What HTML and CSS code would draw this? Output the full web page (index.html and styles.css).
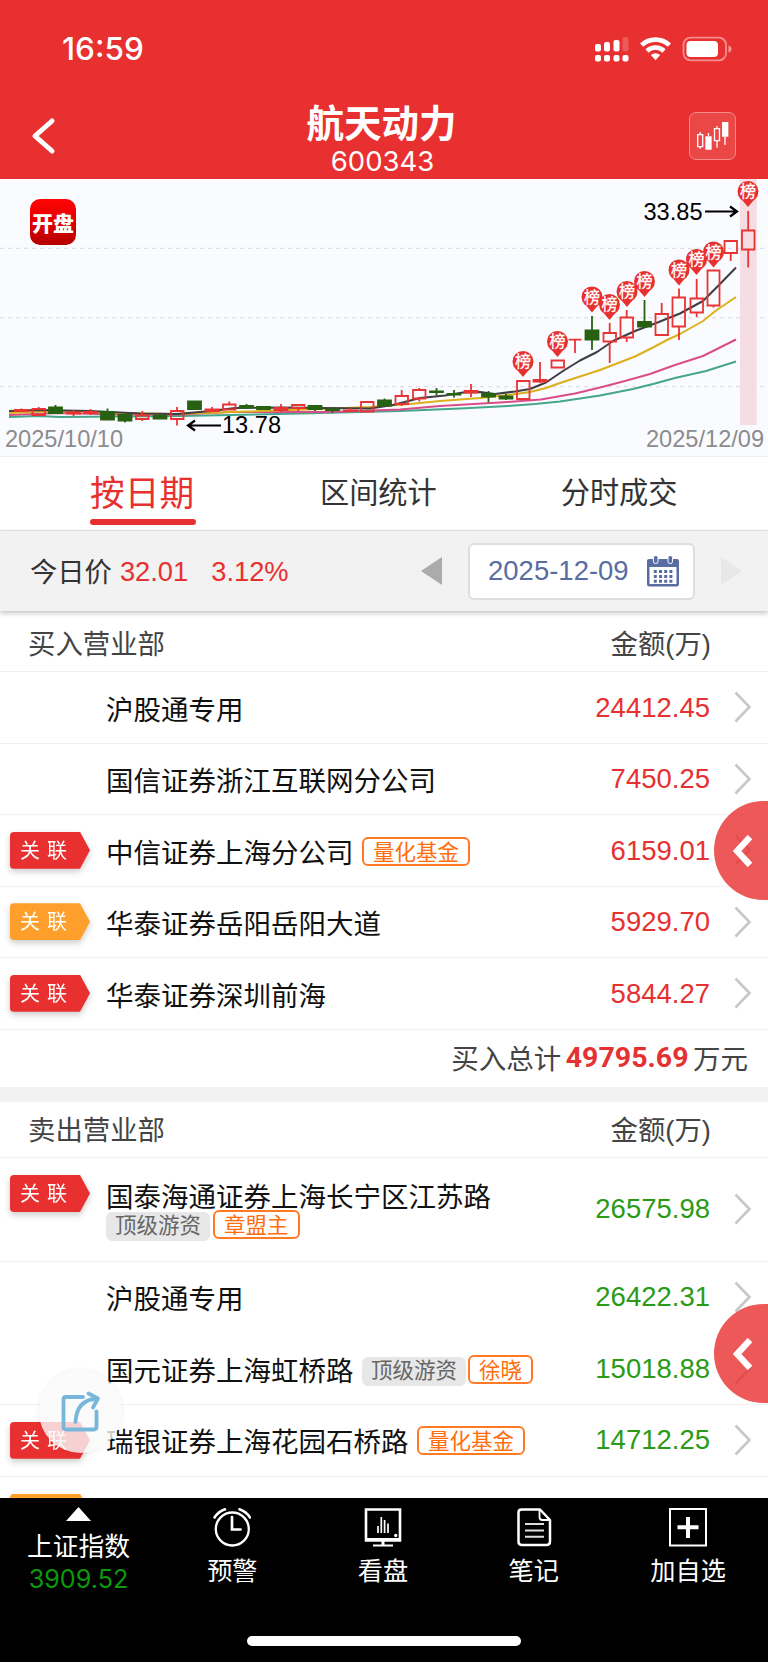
FILE: index.html
```html
<!DOCTYPE html>
<html lang="zh-CN">
<head>
<meta charset="utf-8">
<meta name="viewport" content="width=device-width">
<title>航天动力 600343</title>
<link rel="stylesheet" href="styles.css">
</head>
<body>
<svg width="0" height="0" class="defs">
  <defs>
    <symbol id="chev" viewBox="0 0 18 32"><path d="M1.500 1.500 L15.500 16 L1.500 30.500" fill="none" stroke="#c7c7c7" stroke-width="2.600"/></symbol>
    <symbol id="pin" viewBox="0 0 22 28"><path d="M4.300 18.500 L11 26.500 L17.700 18.500 Z"/><circle cx="11" cy="11" r="10.500"/></symbol>
  </defs>
</svg>
<div class="screen">
  <header class="header">
    <div class="status">
      <span class="clock">16:59</span>
      <svg class="status-icons" width="140" height="28" viewBox="593 35 140 28" fill="#fff">
        <rect x="595" y="44" width="6" height="7.500" rx="2"/><rect x="604" y="42" width="6" height="9.500" rx="2"/><rect x="613.500" y="40" width="6" height="11.500" rx="2"/><rect x="622.500" y="37" width="6" height="14.500" rx="2" opacity=".2"/>
        <rect x="595" y="55" width="6" height="6.500" rx="2"/><rect x="604" y="55" width="6" height="6.500" rx="2"/><rect x="613.500" y="55" width="6" height="6.500" rx="2"/><rect x="622.500" y="55" width="6" height="6.500" rx="2"/>
        <g fill="none" stroke="#fff" stroke-width="4.600"><path d="M641.600 45.200 A20 20 0 0 1 669.400 45.200"/><path d="M647 51 A12.200 12.200 0 0 1 664 51"/></g>
        <path d="M650.800 55 A7 7 0 0 1 660.200 55 L655.500 60.300 Z"/>
        <rect x="683.500" y="37.700" width="42.500" height="22.600" rx="7" fill="none" stroke="#fff" stroke-opacity=".45" stroke-width="1.800"/>
        <rect x="686.500" y="41" width="31.500" height="16" rx="4"/><path d="M728.500 45.500 Q731.500 46.500 731.500 49 T728.500 52.500 Z" opacity=".5"/>
      </svg>
    </div>
    <div class="nav">
      <svg class="back" width="28" height="40" viewBox="0 0 28 40"><path d="M24 5 L7 20 L24 35" fill="none" stroke="#fff" stroke-width="5" stroke-linecap="round" stroke-linejoin="round"/></svg>
      <div class="title"><h1>航天动力</h1><p>600343</p></div>
      <div class="kbtn">
        <svg width="34" height="32" viewBox="696 120 34 32" fill="none" stroke="#fff" stroke-width="1.300"><path d="M697.700 134.700h5v12h-5zM700.200 132v2.700M700.200 146.700v2M714.500 128.700h5v12h-5zM717 126v2.700M717 140.700v7M708.500 133v3M725 137v8"/><path d="M706 137h5v12h-5zM722.700 122.700h5v13.500h-5z" fill="#fff"/></svg>
      </div>
    </div>
  </header>

  <section class="chart">
    <svg width="768" height="277" viewBox="0 179 768 277">
      <defs><linearGradient id="lg" x1="0" y1="0" x2="0" y2="1"><stop offset="0" stop-color="#ff0505"/><stop offset=".4" stop-color="#e90000"/><stop offset="1" stop-color="#b50000"/></linearGradient></defs>
      <rect x="740" y="179" width="16.700" height="246" fill="#f6dde4"/>
      <path d="M0 248.400H768M0 317.700H768M0 386.600H768" stroke="#dfdfe4" stroke-width="1.200" stroke-dasharray="4 4"/>
      <g fill="none" stroke-width="2" stroke-linejoin="round">
        <path stroke="#45a68b" d="M9 417 L38 416 L60 417 L120 416.500 L180 416 L300 413.500 L400 411 L460 408.500 L508 406 L535 404 L560 401.500 L600 395.500 L633 389 L655 383.500 L675 378 L706 371 L736 361.500"/>
        <path stroke="#d94d89" d="M9 415 L60 413 L120 414.500 L180 414.500 L230 412 L330 412 L400 409.500 L440 406 L508 402 L541 399.500 L575 393.500 L600 387.500 L625 381 L650 374 L675 365 L703 356 L720 347.500 L736 339.500"/>
        <path stroke="#dcb01a" d="M9 413 L60 411 L120 413 L175 414 L230 412 L320 409 L370 407 L410 404 L440 401 L480 398 L508 395 L530 392 L546 388 L560 383 L600 370 L635 356.500 L652 348 L667 340 L680 334 L703 321 L716 310.500 L736 297"/>
        <path stroke="#3d3d42" d="M9 411 L38 410 L90 411 L140 413.500 L177 414 L211 411 L235 408 L280 407.500 L320 408 L370 408.500 L393 405 L420 398 L445 395.500 L463 392.500 L480 392 L495 394 L515 391.500 L530 389 L546 382.500 L563 371 L580 360.500 L597 352 L613 341 L635 331 L655 323.500 L680 313.500 L703 301 L719 285 L736 267.500"/>
      </g>
      <g fill="#296112" stroke="#296112" stroke-width="1.800">
        <path d="M49 407.500h13v5.500h-13zM101 412h13v7.500h-13zM118.500 415h13v5.500h-13zM153.500 416h13v2.500h-13zM188 401.500h13v7.500h-13zM240 406h13v1.500h-13zM257 407h13v2h-13zM308.500 406h13v3h-13zM326 409.500h13v.5h-13zM378 400.500h13v5h-13zM430 391.500h13v.7h-13zM447.500 394h13v.7h-13zM482 394h13v2.500h-13zM499.500 396.500h13v2h-13zM585.500 330.500h13v9h-13zM638 322h13v4.500h-13z"/>
        <path fill="none" d="M55.500 405v9M107.500 408.500v6M125 413.500v9M160 414v5M246.500 404v5M315 406v5M332.500 407.500v5.500M384.500 398.500v4M436.500 388v7.500M454 390v7.500M488.500 391v11.500M506 394v6M592 316v34M644.500 300v28"/>
      </g>
      <g fill="none" stroke="#e93434" stroke-width="1.800">
        <path d="M15 410h13v1h-13zM32.500 409h12.500v6h-12.500zM67 412.500h13v1h-13zM84 412h13v1h-13zM136 415.500h12.500v3.500h-12.500zM171 411h12.500v8h-12.500zM205.500 409.500h13v1.500h-13zM223 404.500h12.500v5h-12.500zM274.500 408h13v2h-13zM292 405h12.500v3h-12.500zM344 410.500h13v.5h-13zM361 402h12.500v9.500h-12.500zM395.500 396h12.500v8h-12.500zM413 390h12.500v8.500h-12.500zM464.500 391h13v1.500h-13zM517 381h12.500v18h-12.500zM533.500 380h13v1.500h-13zM551.500 360.500h12.500v7h-12.500zM568.500 339.700h13M603.500 333h12.500v8.500h-12.500zM620.500 317.500h12.500v20h-12.500zM655.500 314h12.500v21h-12.500zM672.500 297.500h12.500v29h-12.500zM690.500 298.500h12.500v14h-12.500zM707.500 270.500h12v35h-12zM724.500 241h12.500v12h-12.500zM742 230.500h12.500v19h-12.500z"/>
        <path d="M21.500 408.500v3M38.700 407v2M73.500 410v6M90.500 409v6M142.300 411v4M142.300 419v2M177 407v4M177 419v6.500M212 407v3M229.300 401.500v3M281 404v8M298.300 408v3M350.500 408v2M401.700 390v6M401.700 404v2M419.300 388v2M419.300 398.500v3M471 384v13M540 362v21M575 339.700v13.300M609.700 323v10M609.700 341.500v21.500M626.700 310v7.500M626.700 337.500v4.500M661.700 303v11M679 288.500v9M679 326.500v13.500M696.700 279v19.500M696.700 312.500v4.500M713.500 305.500v2M730.700 253v8M748.200 211v19.500M748.200 249.500v18"/>
      </g>
      <g fill="#e73030">
        <use href="#pin" x="512" y="350.500" width="22" height="28"/><use href="#pin" x="546.500" y="330.500" width="22" height="28"/><use href="#pin" x="581" y="286" width="22" height="28"/><use href="#pin" x="598.500" y="293.500" width="22" height="28"/><use href="#pin" x="616" y="280.500" width="22" height="28"/><use href="#pin" x="633.500" y="270.500" width="22" height="28"/><use href="#pin" x="668" y="259" width="22" height="28"/><use href="#pin" x="685.500" y="248.500" width="22" height="28"/><use href="#pin" x="702.500" y="241" width="22" height="28"/><use href="#pin" x="737" y="180.500" width="22" height="28"/>
      </g>
      <g class="pin-text">
        <text x="523" y="367">榜</text><text x="557.500" y="347">榜</text><text x="592" y="302.500">榜</text><text x="609.500" y="310">榜</text><text x="627" y="297">榜</text><text x="644.500" y="287">榜</text><text x="679" y="275.500">榜</text><text x="696.500" y="265">榜</text><text x="713.500" y="257.500">榜</text><text x="748" y="197">榜</text>
      </g>
      <g fill="none" stroke="#000" stroke-width="2.200"><path d="M705 211.500H736M730 206.500L737 211.500L730 216.500M221 425.500H189M195 420.500L188 425.500L195 430.500"/></g>
      <g class="axis"><text class="mark" x="643.500" y="219.500">33.85</text><text class="mark" x="222" y="433">13.78</text><text x="5" y="447">2025/10/10</text><text x="646" y="447">2025/12/09</text></g>
      <rect x="30" y="199" width="46" height="46" rx="10" fill="url(#lg)"/>
      <text class="logo-text" x="53" y="230.500">开盘</text>
    </svg>
  </section>

  <nav class="tabs"><span class="tab on">按日期</span><span class="tab t2">区间统计</span><span class="tab t3">分时成交</span></nav>

  <section class="price">
    <span class="today">今日价</span><span class="num p1">32.01</span><span class="num p2">3.12%</span>
    <div class="picker">
      <svg width="21" height="28" viewBox="0 0 21 28"><path d="M21 0V28L0 14Z" fill="#ababab"/></svg>
      <div class="datebox"><span>2025-12-09</span>
        <svg width="32" height="31" viewBox="0 0 32 31"><path fill="#596da3" d="M2 3H30a2 2 0 0 1 2 2V28a2.500 2.500 0 0 1-2.500 2.500H2.500A2.500 2.500 0 0 1 0 28V5a2 2 0 0 1 2-2Z"/><path fill="#fff" d="M2.500 11h27v17h-27z"/><g fill="#596da3" stroke="#fff"><rect x="6.500" y="-.500" width="4.500" height="8" rx="2"/><rect x="21" y="-.500" width="4.500" height="8" rx="2"/></g><path d="M6.800 15.500h19M6.800 20.500h19M6.800 25.300h19" stroke="#596da3" stroke-width="3" stroke-dasharray="3 2.200"/></svg>
      </div>
      <svg width="21" height="28" viewBox="0 0 21 28"><path d="M0 0V28L21 14Z" fill="#e8e8e8"/></svg>
    </div>
  </section>

  <main class="lists">
    <div class="head"><span>买入营业部</span><span>金额(万)</span></div>
    <div class="row"><div class="rel"></div><div class="name">沪股通专用</div><b class="amt">24412.45</b><svg class="go"><use href="#chev"/></svg></div>
    <div class="row"><div class="rel"></div><div class="name">国信证券浙江互联网分公司</div><b class="amt">7450.25</b><svg class="go"><use href="#chev"/></svg></div>
    <div class="row"><div class="rel"><span class="flag">关 联</span></div><div class="name">中信证券上海分公司<span class="tag gap">量化基金</span></div><b class="amt">6159.01</b><svg class="go"><use href="#chev"/></svg></div>
    <div class="row"><div class="rel"><span class="flag amber">关 联</span></div><div class="name">华泰证券岳阳岳阳大道</div><b class="amt">5929.70</b><svg class="go"><use href="#chev"/></svg></div>
    <div class="row"><div class="rel"><span class="flag">关 联</span></div><div class="name">华泰证券深圳前海</div><b class="amt">5844.27</b><svg class="go"><use href="#chev"/></svg></div>
    <div class="total"><span>买入总计</span><strong>49795.69</strong><span>万元</span></div>
    <div class="sep"></div>
    <div class="head"><span>卖出营业部</span><span>金额(万)</span></div>
    <div class="row tall sell"><div class="rel"><span class="flag">关 联</span></div><div class="name two"><div class="line">国泰海通证券上海长宁区江苏路</div><div class="tags"><span class="tag gray">顶级游资</span><span class="tag">章盟主</span></div></div><b class="amt">26575.98</b><svg class="go"><use href="#chev"/></svg></div>
    <div class="row sell plain"><div class="rel"></div><div class="name">沪股通专用</div><b class="amt">26422.31</b><svg class="go"><use href="#chev"/></svg></div>
    <div class="row sell"><div class="rel"></div><div class="name">国元证券上海虹桥路<span class="tag gray gap">顶级游资</span><span class="tag next">徐晓</span></div><b class="amt">15018.88</b><svg class="go"><use href="#chev"/></svg></div>
    <div class="row sell"><div class="rel"><span class="flag">关 联</span></div><div class="name">瑞银证券上海花园石桥路<span class="tag gap">量化基金</span></div><b class="amt">14712.25</b><svg class="go"><use href="#chev"/></svg></div>
    <div class="row cut"><div class="rel"><span class="flag amber"></span></div></div>
  </main>

  <footer class="bar">
    <div class="items">
      <div class="item index"><svg width="25" height="14" viewBox="0 0 25 14"><path d="M12.500 0L25 14H0Z" fill="#fff"/></svg><span>上证指数</span><em>3909.52</em></div>
      <div class="item i2"><svg width="38" height="40" viewBox="214 1507 38 40" fill="none" stroke="#fff"><circle cx="233.300" cy="1529" r="16.500" stroke-width="2.300"/><path d="M233 1517V1529.500H241.500" stroke-width="2.700" stroke-linecap="round"/><path d="M215.500 1517.500Q219.500 1511.500 226 1509.300M251 1517.500Q247 1511.500 240.500 1509.300" stroke-width="2.600" stroke-linecap="round"/></svg><span>预警</span></div>
      <div class="item i3"><svg width="38" height="40" viewBox="365 1507 38 40" fill="none" stroke="#fff"><path d="M367 1509.500H401V1540.500H367Z" stroke-width="2.600"/><path d="M367 1539.500H401" stroke-width="3"/><path d="M384 1540V1545" stroke-width="3"/><path d="M374 1545.500H394" stroke-width="2"/><path d="M379 1526V1533M382.300 1517V1533M385.600 1520V1533M389 1523.500V1533" stroke-width="1.700"/><circle cx="396.700" cy="1535.500" r="1.700" fill="#fff" stroke="none"/></svg><span>看盘</span></div>
      <div class="item i4"><svg width="38" height="40" viewBox="515 1507 38 40" fill="none" stroke="#fff" stroke-width="2.500" stroke-linejoin="round"><path d="M521.500 1509.500H540L550 1520V1541.500Q550 1545 546.500 1545H522Q518.500 1545 518.500 1541.500V1512.500Q518.500 1509.500 521.500 1509.500Z"/><path d="M539.500 1510V1517Q539.500 1520 542.500 1520H550" stroke-width="1.800"/><path d="M525 1524H544M525 1530.500H544M525 1536.700H544" stroke-width="2" stroke="#ddd"/></svg><span>笔记</span></div>
      <div class="item i5"><svg width="40" height="40" viewBox="669 1507 40 40" fill="none" stroke="#fff"><path d="M671 1509H707V1545.500H671Z" stroke-width="2"/><path d="M678.500 1527.300H699.500M689 1517V1538" stroke-width="4"/></svg><span>加自选</span></div>
    </div>
    <div class="home"></div>
  </footer>

  <div class="drawer d1"><svg width="20" height="32" viewBox="0 0 20 32"><path d="M17 2L4 16L17 30" fill="none" stroke="#fff" stroke-width="6.300"/></svg></div>
  <div class="drawer d2"><svg width="20" height="32" viewBox="0 0 20 32"><path d="M17 2L4 16L17 30" fill="none" stroke="#fff" stroke-width="6.300"/></svg></div>
  <div class="share"><svg width="42" height="44" viewBox="60 1388 42 44" fill="none" stroke="#78b7da" stroke-width="3.800" stroke-linecap="round" stroke-linejoin="round"><path d="M83 1395H66Q63.500 1395 63.500 1397.500V1425Q63.500 1427.500 66 1427.500H94Q96.500 1427.500 96.500 1425V1409.500"/><path d="M75.500 1420Q76.500 1398 97 1396.500"/><path d="M88.500 1391.500L98 1396.500L93 1405.500"/></svg></div>
</div>
</body>
</html>
```
FILE: styles.css
```css
* { box-sizing: border-box; }
body { margin: 0; background: #fff; font-family: "Liberation Sans", "Noto Sans CJK SC", sans-serif; }
.defs { position: absolute; }
svg { display: block; flex: none; }
.screen { position: relative; width: 768px; height: 1663px; overflow: hidden; display: flex; flex-direction: column; background: #fff; }

.header { height: 179px; background: #e93030; color: #fff; flex: none; }
.status { height: 98px; padding: 0 35px 0 62px; display: flex; align-items: center; justify-content: space-between; }
.clock { font: 500 31.500px/34px Inter, sans-serif; }
.nav { height: 81px; padding: 0 32px 0 28px; display: flex; align-items: flex-start; justify-content: space-between; }
.back { margin: 18px 18px 0 0; }
.title { text-align: center; }
.title h1 { margin: 0; font: 700 37.500px/46px "Noto Sans CJK SC", sans-serif; }
.title p { margin: 0; font: 400 27.500px/34px Inter, sans-serif; padding-left: 2px; }
.kbtn { width: 47px; height: 48px; margin-top: 14px; border: 1px solid #f38b8b; border-radius: 7px; background: #ec4747; display: grid; place-items: center; }

.chart { height: 277px; background: #fafbff; flex: none; }
.pin-text { font: 400 16px "Noto Sans CJK SC", sans-serif; fill: #fff; stroke: #fff; stroke-width: .3; text-anchor: middle; }
.axis { font-size: 23.600px; fill: #8c8c8c; }
.mark { fill: #000; font-size: 23.600px; }
.logo-text { font: 900 21px "Noto Sans CJK SC", sans-serif; fill: #fff; text-anchor: middle; }

.tabs { height: 75px; border-top: 1px solid #f0f0f4; border-bottom: 1px solid #e8e8e8; display: flex; color: #333; font: 400 29.200px/66px "Noto Sans CJK SC", sans-serif; flex: none; padding-left: 90px; }
.tab.on { width: 106px; height: 68px; font-size: 34.700px; line-height: 69px; color: #e93030; position: relative; white-space: nowrap; }
.tab.on::after { content: ""; position: absolute; left: 0; right: 0; bottom: 0; height: 6px; border-radius: 3px; background: #e93030; }
.t2 { margin-left: 124px; }
.t3 { margin-left: 124px; }

.price { height: 80px; background: #f2f2f2; flex: none; box-shadow: 0 2px 5px rgba(0,0,0,.25); display: flex; align-items: center; padding: 0 26px 0 30px; color: #333; font-size: 27.300px; z-index: 1; }
.today { padding-bottom: 2px; }
.num { color: #e93030; padding-top: 2px; }
.p1 { margin-left: 8px; }
.p2 { margin-left: 23px; }
.picker { margin-left: auto; display: flex; align-items: center; gap: 26px; }
.datebox { width: 227px; height: 57px; border: 2px solid #dedede; border-radius: 6px; background: #fff; color: #596da3; display: flex; align-items: center; justify-content: space-between; padding: 0 14px 0 18px; font-size: 27.500px; }

.lists { flex: none; height: 887px; padding-top: 5px; overflow: hidden; font-family: "Liberation Sans", "Noto Sans CJK SC", sans-serif; }
.head { height: 56px; border-bottom: 1px solid #f1f1f1; padding: 0 57px 3px 28px; display: flex; justify-content: space-between; align-items: center; font-size: 27.400px; color: #444; }
.row { height: 71.500px; border-bottom: 1px solid #f1f1f1; display: flex; align-items: center; padding-right: 16px; }
.rel { width: 106px; flex: none; padding-left: 10px; }
.flag { display: block; width: 80px; height: 37px; border-radius: 4px; background: #e93030; color: #fff; font: 400 20px/35px "Noto Sans CJK SC", sans-serif; padding-left: 10px; word-spacing: 2.500px; clip-path: polygon(0 0, 70px 0, 80px 50%, 70px 100%, 0 100%); }
.rel:has(.flag) { filter: drop-shadow(0 3px 3px rgba(0,0,0,.2)); }
.flag.amber { background: #ff9f2b; }
.name { flex: 1; display: flex; align-items: center; font: 400 27.500px/34px "Noto Sans CJK SC", sans-serif; color: #111; white-space: nowrap; padding-top: 1px; }
.amt { font-weight: 400; font-size: 27.500px; line-height: 32px; color: #e53131; padding-top: 1px; }
.sell .amt { color: #2a9b16; padding-top: 0; }
.go { width: 18px; height: 32px; margin-left: 24px; }
.tag { height: 29px; border: 2px solid #ff7a22; border-radius: 6px; color: #ff6d0d; padding: 0 9px; font-size: 21.500px; line-height: 23px; }
.name > .tag { margin-top: 1px; }
.tag.gray { background: #e7e7e7; border-color: #e7e7e7; color: #666; padding: 0 7px; line-height: 20px; position: relative; top: 2px; }
.gap { margin-left: 8.500px; }
.next { margin-left: 2px; }
.total { height: 57px; display: flex; justify-content: flex-end; align-items: center; padding: 0 20px 2px 0; font: 400 27.500px/34px "Noto Sans CJK SC", sans-serif; color: #444; }
.total strong { font: 700 28.500px/34px Roboto, sans-serif; color: #e53131; margin: 0 4.500px; padding-top: 2px; }
.sep { height: 15.500px; background: #f2f2f2; }
.tall { height: 103.500px; }
.tall .rel { align-self: flex-start; padding-top: 17px; }
.sell .name { margin-top: -1px; }
.sell .name.two { display: block; padding: 0; margin: 0; }
.line { line-height: 30px; }
.tags { display: flex; gap: 3px; }
.plain { border-color: transparent; height: 72px; }
.cut { border: 0; }

.bar { flex: none; height: 164px; background: #000; color: #fff; position: relative; z-index: 2; display: flex; flex-direction: column; align-items: center; }
.items { width: 768px; height: 138px; display: flex; font: 400 25.200px/32px "Noto Sans CJK SC", sans-serif; }
.item { display: flex; flex-direction: column; align-items: center; padding-top: 9px; width: 150.700px; }
.item span { margin-top: 6px; }
.index { width: 157px; }
.index span { font-size: 25.800px; line-height: 34px; margin-top: 7px; }
.index em { font: 400 25.200px/34px Inter, sans-serif; color: #0c9a0c; }
.i5 { width: 158px; }
.home { width: 274px; height: 10px; border-radius: 5px; background: #fff; }

.drawer { position: absolute; right: 0; width: 54px; height: 99px; border-radius: 49.500px 0 0 49.500px; background: rgba(233,48,48,.8); display: flex; align-items: center; padding-left: 19px; z-index: 3; }
.d1 { top: 801px; }
.d2 { top: 1304px; }
.share { position: absolute; left: 39px; top: 1370px; width: 83px; height: 83px; border-radius: 50%; background: rgba(250,250,250,.8); box-shadow: 0 0 5px rgba(0,0,0,.08); display: grid; place-items: center; z-index: 3; }
```
